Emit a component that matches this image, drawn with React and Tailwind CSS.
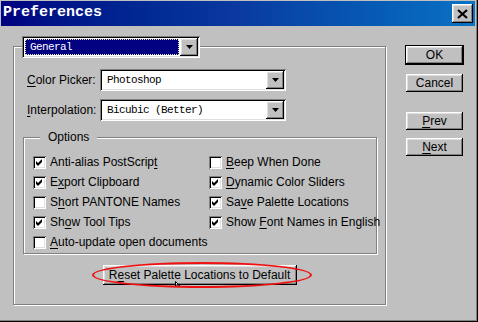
import React from 'react'

const raised =
  'shadow-[inset_-1px_-1px_0_#000,inset_1px_1px_0_#fff,inset_-2px_-2px_0_#808080,inset_2px_2px_0_#dfdfdf]'
const sunken =
  'shadow-[inset_1px_1px_0_#808080,inset_-1px_-1px_0_#fff,inset_2px_2px_0_#000,inset_-2px_-2px_0_#dfdfdf]'
const etched = 'border border-[#808080] shadow-[inset_1px_1px_0_#fff,1px_1px_0_#fff]'

const U = ({ children }) => <span className="underline underline-offset-[2px]">{children}</span>

const Arrow = () => (
  <svg width="7" height="4" viewBox="0 0 7 4">
    <polygon points="0,0 7,0 3.5,4" fill="#000" />
  </svg>
)

const Combo = ({ width, value, selected }) => (
  <div className={`h-[22px] bg-white p-[2px] flex ${sunken}`} style={{ width }}>
    {selected ? (
      <div className="flex-1 p-px">
        <div className="h-full bg-[#000080] border border-dotted border-[#e8e8b0] flex items-center pl-[4px] text-white font-['Liberation_Mono'] text-[11px] tracking-[-0.6px]">
          {value}
        </div>
      </div>
    ) : (
      <div className="flex-1 flex items-center pl-[5px] text-black font-['Liberation_Mono'] text-[11px] tracking-[-0.6px]">
        {value}
      </div>
    )}
    <div className={`w-[18px] h-full bg-[#c0c0c0] flex items-center justify-center ${raised}`}>
      <Arrow />
    </div>
  </div>
)

const Check = ({ checked, children }) => (
  <div className="h-[20px] flex items-center gap-[4px]">
    <div className={`w-[13px] h-[13px] bg-white shrink-0 ${sunken}`}>
      {checked && (
        <svg width="13" height="13" viewBox="0 0 13 13">
          <polygon points="3,5 5,7 9,3 9,6 5,10 3,8" fill="#000" />
        </svg>
      )}
    </div>
    <span className="text-[12px] leading-[15px] text-black whitespace-nowrap">{children}</span>
  </div>
)

const Btn = ({ children, className = '' }) => (
  <div
    className={`h-[18px] w-[57px] bg-[#c0c0c0] flex items-center justify-center text-[12px] text-black ${raised} ${className}`}
  >
    {children}
  </div>
)

export default function App() {
  return (
    <div className="w-[478px] h-[322px] bg-[#c0c0c0] flex flex-col pt-px pl-px font-['Liberation_Sans',sans-serif] shadow-[inset_-1px_-1px_0_#000,inset_-2px_-2px_0_#808080] overflow-hidden">
      {/* title bar */}
      <div className="w-[474px] h-[25px] bg-gradient-to-r from-[#000080] via-[#0a3aa0] to-[#0a72c4] flex items-center justify-between pl-[2px] pr-[2px]">
        <span className="text-white font-['Liberation_Mono',monospace] font-bold text-[15px]">
          Preferences
        </span>
        <div className={`w-[21px] h-[19px] bg-[#c0c0c0] flex items-center justify-center ${raised}`}>
          <svg width="11" height="10" viewBox="0 0 11 10">
            <path d="M1 1 L10 9 M10 1 L1 9" stroke="#000" strokeWidth="2.2" />
          </svg>
        </div>
      </div>

      {/* body */}
      <div className="flex pt-[20px] pl-[12px]">
        <div className={`w-[373px] h-[259px] flex flex-col ${etched}`}>
          <div className="-mt-[11px] ml-[8px]">
            <Combo width={178} value="General" selected />
          </div>

          <div className="mt-[11px] ml-[13px] flex flex-col gap-[8px]">
            <div className="flex items-center">
              <span className="w-[73px] text-[12px] text-black">
                <U>C</U>olor Picker:
              </span>
              <Combo width={186} value="Photoshop" />
            </div>
            <div className="flex items-center">
              <span className="w-[73px] text-[12px] text-black">
                <U>I</U>nterpolation:
              </span>
              <Combo width={186} value="Bicubic (Better)" />
            </div>
          </div>

          <div className={`mt-[16px] ml-[9px] w-[354px] h-[117px] flex flex-col ${etched}`}>
            <span className="-mt-[8px] ml-[16px] self-start bg-[#c0c0c0] px-[8px] text-[12px] leading-[15px] text-black">
              Options
            </span>
            <div className="mt-[7px] ml-[9px] grid grid-cols-[176px_1fr]">
              <div className="flex flex-col">
                <Check checked>Anti-alias PostScrip<U>t</U></Check>
                <Check checked>E<U>x</U>port Clipboard</Check>
                <Check>S<U>h</U>ort PANTONE Names</Check>
                <Check checked>Sh<U>o</U>w Tool Tips</Check>
                <Check><U>A</U>uto-update open documents</Check>
              </div>
              <div className="flex flex-col">
                <Check><U>B</U>eep When Done</Check>
                <Check checked><U>D</U>ynamic Color Sliders</Check>
                <Check checked>Sa<U>v</U>e Palette Locations</Check>
                <Check checked>Show <U>F</U>ont Names in English</Check>
              </div>
            </div>
          </div>

          <div className="mt-[11px] self-center relative">
            <div className={`h-[20px] w-[194px] bg-[#c0c0c0] flex items-center justify-center text-[12px] text-black ${raised}`}>
              R<U>e</U>set Palette Locations to Default
            </div>
            <div className="absolute -left-[11px] -top-[3px] w-[220px] h-[26px] rounded-[50%] border-2 border-[#f01010]" />
            <svg className="absolute left-[72px] top-[16px]" width="6" height="6" viewBox="0 0 6 6">
              <path d="M0.5 0.5 L0.5 5 L2 3.5 L4.5 4.5 Z" fill="#fff" stroke="#000" strokeWidth="1" />
            </svg>
          </div>
        </div>

        {/* buttons */}
        <div className="ml-[19px] -mt-[1px] flex flex-col items-start">
          <div className="border border-black">
            <Btn>OK</Btn>
          </div>
          <Btn className="mt-[9px] ml-px">Cancel</Btn>
          <Btn className="mt-[20px] ml-px"><U>P</U>rev</Btn>
          <Btn className="mt-[8px] ml-px"><U>N</U>ext</Btn>
        </div>
      </div>
    </div>
  )
}
